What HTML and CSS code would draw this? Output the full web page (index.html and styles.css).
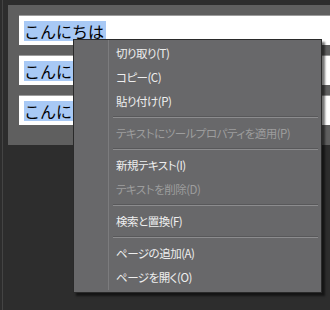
FILE: index.html
```html
<!DOCTYPE html>
<html lang="ja">
<head>
<meta charset="utf-8">
<link rel="stylesheet" href="styles.css">
</head>
<body>
<div class="app">
  <div class="rail"></div>
  <div class="panel">
    <div class="field"><span class="sel">こんにちは</span></div>
    <div class="field"><span class="sel">こんにちは</span></div>
    <div class="field"><span class="sel">こんにちは</span></div>
  </div>
</div>
<div class="menu">
  <div class="item">切り取り(T)</div>
  <div class="item">コピー(C)</div>
  <div class="item">貼り付け(P)</div>
  <div class="sep"></div>
  <div class="item disabled">テキストにツールプロパティを適用(P)</div>
  <div class="sep"></div>
  <div class="item">新規テキスト(I)</div>
  <div class="item disabled">テキストを削除(D)</div>
  <div class="sep"></div>
  <div class="item">検索と置換(F)</div>
  <div class="sep"></div>
  <div class="item">ページの追加(A)</div>
  <div class="item">ページを開く(O)</div>
</div>
</body>
</html>
```
FILE: styles.css
```css
html, body {
  margin: 0;
  padding: 0;
}
body {
  width: 330px;
  height: 310px;
  overflow: hidden;
  background: #2d2d2d;
  font-family: "Noto Sans CJK JP", "Noto Sans", sans-serif;
  position: relative;
}
.app {
  display: flex;
  height: 310px;
}
.rail {
  width: 1px;
  margin-left: 2px;
  margin-right: 5px;
  background: #444444;
}
.panel {
  flex: 1;
  height: 120px;
  margin-top: 5px;
  padding: 10px 0 10px 11px;
  background: #5f5f5f;
  display: flex;
  flex-direction: column;
  gap: 10px;
}
.field {
  height: 29px;
  background: #ffffff;
  border-top: 1px solid #9c9c9c;
  display: flex;
  align-items: center;
  padding-left: 5px;
}
.sel {
  background: #a8c9f5;
  color: #000;
  font-size: 16px;
  line-height: 20px;
  height: 20px;
  padding-right: 2px;
}
.menu {
  position: absolute;
  left: 73px;
  top: 39px;
  width: 247px;
  padding: 1px 0 3px 0;
  background: #68686a;
  border: 1px solid #2a2a2a;
  box-shadow: 3px 3px 2px rgba(0, 0, 0, 0.55);
  font-size: 11.5px;
  letter-spacing: -0.5px;
  font-feature-settings: "palt";
}
.menu::before {
  content: "";
  position: absolute;
  left: 34px;
  top: 0;
  bottom: 2px;
  width: 1px;
  background: #7c7c7e;
}
.item {
  height: 24px;
  line-height: 24px;
  padding-left: 42px;
  color: #eeeeee;
  white-space: nowrap;
}
.item.disabled {
  color: #9d9d9d;
}
.sep {
  height: 8px;
  margin: 0 3px 0 39px;
  display: flex;
  flex-direction: column;
  justify-content: center;
}
.sep::before {
  content: "";
  height: 1px;
  background: #58585a;
}
.sep::after {
  content: "";
  height: 1px;
  background: #8c8c8e;
}
```
